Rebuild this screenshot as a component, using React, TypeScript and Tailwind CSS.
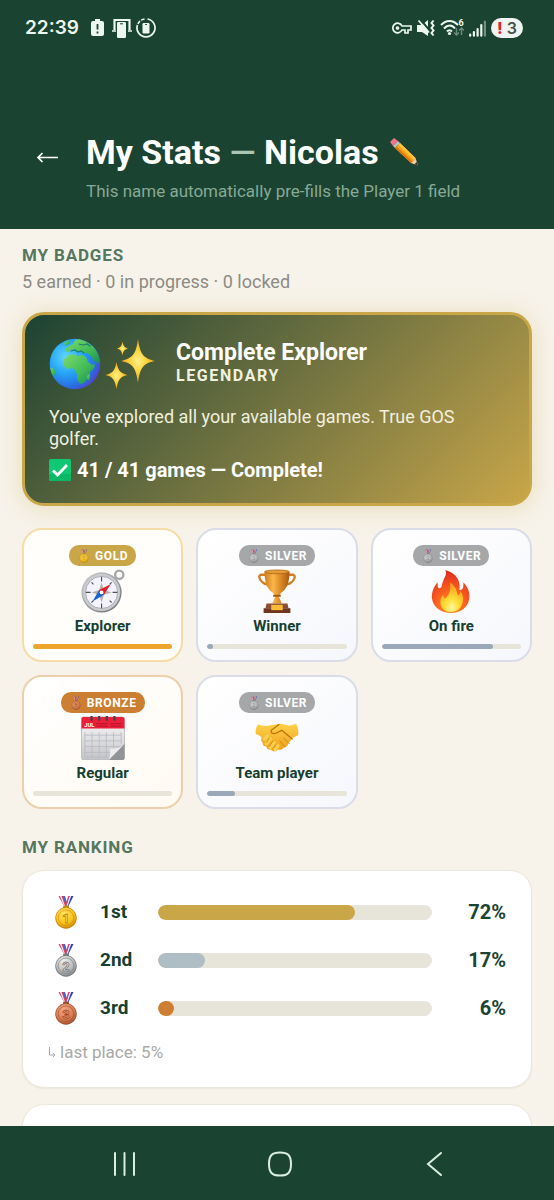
import React from "react";
import clsx from "clsx";

type Tier = "gold" | "silver" | "bronze";

interface Badge {
  name: string;
  tier: Tier;
  progress: number;
  icon: React.ReactNode;
}

const MEDALS = {
  gold: { light: "#ffe564", base: "#fbc31c", dark: "#c98308", digit: "1" },
  silver: { light: "#f0f0f0", base: "#b9babb", dark: "#77797b", digit: "2" },
  bronze: { light: "#f3ab86", base: "#d97d55", dark: "#a04c2c", digit: "3" },
};

const Medal = ({ tier, className }: { tier: Tier; className?: string }) => {
  const c = MEDALS[tier];
  return (
    <svg viewBox="0 0 22 34" className={className} aria-hidden="true">
      <defs>
        <radialGradient id={`medal-${tier}`} cx="0.4" cy="0.3" r="0.8">
          <stop offset="0" stopColor={c.light} />
          <stop offset="0.6" stopColor={c.base} />
          <stop offset="1" stopColor={c.dark} />
        </radialGradient>
      </defs>
      <path d="M3.500 1h4.500l4 11H9.500z" fill="#dc4757" />
      <path d="M5 1h1.500l3.500 10H9z" fill="#f3eef5" />
      <path d="M7.500 1h2.500l3 10h-2z" fill="#4a5fd0" />
      <path d="M18.500 1h-4.500l-4 11h3z" fill="#2742bb" />
      <path d="M16.200 1h-1.500L11 11h1.700z" fill="#eeeaf6" />
      <path d="M14.500 1h-1.300l-2.700 9 1 1z" fill="#df4759" />
      <rect x="8" y="10.500" width="6" height="3.500" rx="1.500" fill={c.dark} />
      <circle cx="11" cy="23" r="10.700" fill={c.dark} />
      <circle cx="11" cy="22.700" r="10" fill={`url(#medal-${tier})`} />
      <circle cx="11" cy="22.800" r="7.800" fill="none" stroke={c.dark} strokeWidth="0.800" opacity="0.700" />
      <text
        x="11"
        y="27.500"
        textAnchor="middle"
        fontSize="13"
        fontWeight="700"
        fontFamily="Roboto, sans-serif"
        fill={c.light}
        stroke={c.dark}
        strokeWidth="0.800"
      >
        {c.digit}
      </text>
    </svg>
  );
};

const Globe = () => (
  <svg viewBox="0 0 52 52" className="size-[52px]" aria-hidden="true">
    <defs>
      <radialGradient id="sea" cx="0.32" cy="0.36" r="0.75">
        <stop offset="0" stopColor="#5fd6ff" />
        <stop offset="0.45" stopColor="#25a3f5" />
        <stop offset="0.8" stopColor="#2a6be0" />
        <stop offset="1" stopColor="#5a3cc4" />
      </radialGradient>
      <linearGradient id="land" x1="0" y1="0" x2="1" y2="1">
        <stop offset="0" stopColor="#7ddd6c" />
        <stop offset="0.6" stopColor="#3fb955" />
        <stop offset="1" stopColor="#178a5a" />
      </linearGradient>
      <clipPath id="globe-clip">
        <circle cx="26" cy="26" r="25" />
      </clipPath>
    </defs>
    <circle cx="26" cy="26" r="25.300" fill="url(#sea)" />
    <g clipPath="url(#globe-clip)" fill="url(#land)">
      <path d="M18 11l2-3 4-2 2-4 6-2 10 3 8 9 3 11-3 2-3-1-2-1-3-5-4-3-5 0-3-2-3 1-2-3-3 1-2 2-4-1 1-3 3-1z" />
      <path d="M15 21l5-4 6-1 2 2 5-1 4 2 2 5 4 3 3-1-1 4-5 5-1 5-4 5-4 1-3-5 0-5-2-4-3-2-5 1-4-4z" />
      <path d="M38 38l3-3 0 5-2 3z" />
      <path d="M0 29l4 1 3 3-1 4-4 3-3-4z" />
      <path d="M15 5l5-3 1 3-4 3z" />
    </g>
    <path d="M22 13l4-1 3 2 3-1 3 2M30 6l4 1 4-1 3 2" fill="none" stroke="#167e74" strokeWidth="1.200" strokeLinecap="round" />
  </svg>
);

const Sparkles = () => (
  <svg viewBox="0 0 52 52" className="size-[52px]" aria-hidden="true">
    <defs>
      <radialGradient id="spark" cx="0.5" cy="0.5" r="0.55">
        <stop offset="0" stopColor="#fff08a" />
        <stop offset="0.45" stopColor="#fdd33d" />
        <stop offset="1" stopColor="#f39a1b" />
      </radialGradient>
    </defs>
    <g fill="url(#spark)">
      <path d="M33 1C35 16 38 20 50 23 38 25 35 30 33 45 31 30 28 25 16 23 28 20 31 16 33 1z" />
      <path d="M11.500 24c1.500 8.500 3.500 11 11 13-7.500 1.500-9.500 5-11 14-1.500-9-3.500-12.500-11-14 7.500-2 9.500-4.500 11-13z" />
      <path d="M17.500 3.500c.8 4.500 1.800 6 5.500 7-3.700 1-4.700 2.500-5.500 7-.8-4.500-1.800-6-5.500-7 3.700-1 4.700-2.500 5.500-7z" />
    </g>
  </svg>
);

const Compass = () => (
  <svg viewBox="0 0 46 46" className="size-11" aria-hidden="true">
    <defs>
      <linearGradient id="compass-rim" x1="0" y1="0" x2="1" y2="1">
        <stop offset="0" stopColor="#cdd0d2" />
        <stop offset="0.5" stopColor="#9da1a4" />
        <stop offset="1" stopColor="#666a6e" />
      </linearGradient>
    </defs>
    <circle cx="40" cy="6" r="4.300" fill="none" stroke="#a6a9ac" strokeWidth="2.500" />
    <path d="M34 9l3 3-3 3-3-4z" fill="#8b8f92" />
    <circle cx="21.500" cy="24.500" r="21" fill="url(#compass-rim)" />
    <circle cx="21.500" cy="24.500" r="19.500" fill="#c9cbce" />
    <circle cx="21.500" cy="24.500" r="16.800" fill="#f4f3fb" stroke="#999da2" strokeWidth="0.800" />
    <path d="M21.500 8v5M21.500 36v5M5 24.500h5M33 24.500h5M11 14l2 2M30 33l2 2M11 35l2-2M30 16l2-2" stroke="#4c5158" strokeWidth="1.200" />
    <path d="M21.500 14l2.500 8 8 2.500-8 2.500-2.500 8-2.500-8-8-2.500 8-2.500z" fill="#b5b1a8" />
    <path d="M31 16l-12 6 5 5z" fill="#e2192f" />
    <path d="M12 34l12-7-5-5z" fill="#1662cf" />
    <circle cx="21.500" cy="24.500" r="2" fill="#fff" />
  </svg>
);

const Trophy = () => (
  <svg viewBox="0 0 46 46" className="size-11" aria-hidden="true">
    <defs>
      <linearGradient id="cup" x1="0" y1="0" x2="1" y2="0">
        <stop offset="0" stopColor="#d57d17" />
        <stop offset="0.35" stopColor="#f9b74c" />
        <stop offset="0.6" stopColor="#e19029" />
        <stop offset="1" stopColor="#a9590f" />
      </linearGradient>
    </defs>
    <path d="M12 6H6c-3 1-1 6 2 8 2 2 5 2 8 3M34 6h6c3 1 1 6-2 8-2 2-5 2-8 3" fill="none" stroke="#cf8026" strokeWidth="2.400" />
    <path d="M10 3h26c0 10-2 18-9 22l-2 4 3 7H18l3-7-2-4C12 21 10 13 10 3z" fill="url(#cup)" />
    <ellipse cx="23" cy="3" rx="13" ry="2" fill="#e59a33" stroke="#a9610f" strokeWidth="0.800" />
    <path d="M19 27h8v2h-8z" fill="#a9590f" />
    <path d="M12 36h22l1 5H11z" fill="#8e5034" />
    <path d="M9 41h28v5H9z" fill="#70371f" />
    <rect x="17" y="37.500" width="12" height="5.500" fill="#f9bd35" />
  </svg>
);

const Fire = () => (
  <svg viewBox="0 0 46 46" className="size-11" aria-hidden="true">
    <defs>
      <radialGradient id="flame" cx="0.5" cy="0.85" r="0.85">
        <stop offset="0" stopColor="#ff9d1d" />
        <stop offset="0.5" stopColor="#fa5b20" />
        <stop offset="1" stopColor="#df281e" />
      </radialGradient>
      <radialGradient id="flame-core" cx="0.5" cy="0.85" r="0.75">
        <stop offset="0" stopColor="#fff7a1" />
        <stop offset="0.4" stopColor="#ffdf38" />
        <stop offset="1" stopColor="#fda11f" />
      </radialGradient>
    </defs>
    <path
      d="M17 1c8 2 15 8 15 17 0 3-1 4 1 4 3-1 3-4 3-8 5 5 7 11 6 17-1 9-9 15-19 15S4 40 3 30c0-5 1-11 6-16 0 4 0 6 2 6 3 0 2-4 4-8 2-5 4-7 2-11z"
      fill="url(#flame)"
    />
    <path
      d="M22 14c6 4 7 8 8 14 1-1 3-3 3-5 4 7 3 11 1 15-2 5-6 7-11 7-7 0-12-5-11-12 0-3 2-5 3-6 0 2 1 4 2 4 4-4 6-8 5-17z"
      fill="url(#flame-core)"
    />
  </svg>
);

const Calendar = () => (
  <svg viewBox="0 0 46 46" className="size-11" aria-hidden="true">
    <defs>
      <linearGradient id="sheet" x1="0" y1="0" x2="0" y2="1">
        <stop offset="0" stopColor="#fafafa" />
        <stop offset="1" stopColor="#c3c4c8" />
      </linearGradient>
    </defs>
    <rect x="0.500" y="1" width="45" height="45" rx="2.500" fill="url(#sheet)" stroke="#b2b3b8" strokeWidth="0.800" />
    <path d="M0.500 13V3a2 2 0 0 1 2-2h41a2 2 0 0 1 2 2v10z" fill="#eb1f38" />
    <path d="M16 8h12M31 8h11M16 10.500h12M31 10.500h11" stroke="#c11630" strokeWidth="1.300" />
    <text x="3.500" y="11.500" fontSize="6" fontWeight="700" fontFamily="Roboto, sans-serif" fill="#fff">
      JUL
    </text>
    <path d="M11 0v4M19 0v4M27 0v4M35 0v4" stroke="#45414d" strokeWidth="2.400" strokeLinecap="round" />
    <path d="M4 20h38M4 26h38M4 32h38M4 38h26M4 43h24M4 17v26M11.500 17v26M19 17v26M26.500 17v26M34 17v16M42 17v12" stroke="#b9bac1" strokeWidth="0.900" />
    <path d="M29 46L45.500 29v15a2 2 0 0 1-2 2z" fill="#929397" />
    <path d="M29 46c2-4 2-9 1-12 5 1 11 0 15.500-5z" fill="#ececef" />
  </svg>
);

const Handshake = () => (
  <svg viewBox="0 0 46 46" className="size-11" aria-hidden="true">
    <defs>
      <linearGradient id="hands" x1="0" y1="0" x2="0" y2="1">
        <stop offset="0" stopColor="#ffd24a" />
        <stop offset="1" stopColor="#ee9d17" />
      </linearGradient>
    </defs>
    <path
      d="M3 9c4 1 8 2 12 1l6-1 5-1c4 0 7 2 11 2l6-2c2 4 3 8 2 12l-6 3c-1 3-3 4-4 5 0 3-3 5-5 5-1 2-4 3-6 2-3 3-6 2-7 0-3 1-5-1-5-3-3 0-4-2-4-4-2-1-2-4-1-6-2-1-4-3-6-3-1-3 0-7 2-10z"
      fill="url(#hands)"
    />
    <path d="M25 9l-8 6c-1 4 4 4 7 2l4-2 11 9" fill="none" stroke="#bd6e0b" strokeWidth="1.300" strokeLinecap="round" />
    <path d="M30 23l6 6M26 26l5 6" fill="none" stroke="#cf8414" strokeWidth="1" strokeLinecap="round" />
    <path d="M10 24l3-3M12 29l4-5M16 33l4-5M21 35l3-4" stroke="#fbd04d" strokeWidth="3.600" strokeLinecap="round" />
    <path d="M12 28l3-5M15 32l4-6M19 34l3-4" stroke="#cc7e0c" strokeWidth="0.800" />
  </svg>
);

const Pencil = () => (
  <svg viewBox="0 0 30 30" className="size-[30px]" aria-hidden="true">
    <path d="M1 5l4-4 4 3-5 5z" fill="#f0748a" />
    <path d="M4 9l5-5 2 2-5 5z" fill="#b9c2ca" />
    <path d="M6 11l5-5 15.500 15-4.500 5z" fill="#f9a11b" />
    <path d="M9.200 7.800L11 6l15.500 15-1.800 2z" fill="#ffc43d" />
    <path d="M6 11l1.500-1.500 16 15L22 26z" fill="#e2760e" />
    <path d="M26.500 21l2.500 7.500-7-2.500z" fill="#f3cc9b" />
    <path d="M27.800 25l1.200 3.500-3.600-1.200z" fill="#3b3433" />
  </svg>
);

const Check = () => (
  <svg viewBox="0 0 22 22" className="size-[22px]" aria-hidden="true">
    <rect width="22" height="22" rx="1.500" fill="#10c873" />
    <path d="M0 15h22v5.500a1.500 1.500 0 0 1-1.500 1.500h-19A1.500 1.500 0 0 1 0 20.500z" fill="#0bb866" />
    <path d="M4 11.500l4.500 4.500L18 6" fill="none" stroke="#fff" strokeWidth="2.800" />
  </svg>
);

const badges: Badge[] = [
  { name: "Explorer", tier: "gold", progress: 100, icon: <Compass /> },
  { name: "Winner", tier: "silver", progress: 4, icon: <Trophy /> },
  { name: "On fire", tier: "silver", progress: 80, icon: <Fire /> },
  { name: "Regular", tier: "bronze", progress: 0, icon: <Calendar /> },
  { name: "Team player", tier: "silver", progress: 20, icon: <Handshake /> },
];

const ranking: { label: string; tier: Tier; value: number }[] = [
  { label: "1st", tier: "gold", value: 72 },
  { label: "2nd", tier: "silver", value: 17 },
  { label: "3rd", tier: "bronze", value: 6 },
];

const StatusBar = () => (
  <div className="flex h-14 items-center justify-between pl-[25px] pr-[31px] text-[#ecf8ef]">
    <div className="flex items-center gap-2">
      <span className="mr-1 font-[Inter,sans-serif] text-[19px] font-semibold">22:39</span>
      <svg viewBox="0 0 13 18" className="h-[18px] w-[13px]" aria-hidden="true">
        <path d="M4 0h5v2h2a2 2 0 0 1 2 2v11a2 2 0 0 1-2 2H2a2 2 0 0 1-2-2V4a2 2 0 0 1 2-2h2z" fill="currentColor" />
        <path d="M6.500 5v5.500M6.500 12.500v2" stroke="#1b4332" strokeWidth="1.800" />
      </svg>
      <svg viewBox="0 0 20 20" className="size-5" aria-hidden="true">
        <path d="M2.500 12V2h15v10" fill="none" stroke="currentColor" strokeWidth="2.200" />
        <path d="M0 13h4M16 13h4" stroke="currentColor" strokeWidth="1.600" />
        <rect x="5" y="4" width="9" height="16" rx="1.200" fill="currentColor" />
        <path d="M8 5.800h3" stroke="#1b4332" strokeWidth="1" />
      </svg>
      <svg viewBox="0 0 20 20" className="-ml-1 size-5" aria-hidden="true">
        <path d="M11.500 1a9 9 0 1 1-3 0" fill="none" stroke="currentColor" strokeWidth="1.700" />
        <path d="M4 2l2.500 3M1 6l3 2" stroke="#1b4332" strokeWidth="1.200" />
        <rect x="6.500" y="5" width="7" height="10.500" rx="1.200" fill="currentColor" />
        <path d="M9 6.500h2" stroke="#1b4332" strokeWidth="0.900" />
      </svg>
    </div>
    <div className="flex items-center gap-[5px]">
      <svg viewBox="0 0 20 12" className="h-3 w-5" fill="none" stroke="currentColor" strokeWidth="1.700" aria-hidden="true">
        <path d="M10 4A4.800 4.800 0 1 0 10 8h3v3h3V8h3V4z" />
        <circle cx="5.500" cy="6" r="1" />
      </svg>
      <svg viewBox="0 0 18 18" className="size-[18px]" aria-hidden="true">
        <path d="M0 6h5l6-5v16l-6-4H0z" fill="currentColor" />
        <path d="M3 0l10 12" stroke="#1b4332" strokeWidth="2" />
        <path d="M1.500 1.500l10.500 12" stroke="currentColor" strokeWidth="1.800" />
        <path d="M16.500 1.500l-2 2.500 2 2.500-2 2.500 2 2.500-2 2.500 2 2.500" fill="none" stroke="currentColor" strokeWidth="2" />
      </svg>
      <svg viewBox="0 0 24 20" className="h-5 w-6" aria-hidden="true">
        <g fill="none" stroke="currentColor" strokeWidth="2">
          <path d="M1 7c5-5.500 12-5.500 17 0M4 10.500c3.500-4 8-4 11 0" />
          <path d="M7 13.500c1.500-1.700 3.500-1.700 5 0" />
        </g>
        <circle cx="9.500" cy="15.500" r="1.600" fill="currentColor" />
        <path d="M16.500 10v7m-2.500-2.500l2.500 2.500 2.500-2.500M21.500 17v-7m-2.500 2.500l2.500-2.500 2.500 2.500" fill="none" stroke="#6b8c7b" strokeWidth="1.400" />
        <text x="18.500" y="8" fontSize="9" fontWeight="700" fontFamily="Roboto, sans-serif" fill="currentColor">
          6
        </text>
      </svg>
      <svg viewBox="0 0 17 17" className="size-[17px]" strokeWidth="2.200" strokeLinecap="round" aria-hidden="true">
        <path d="M1.200 14.500v1.200M4.900 12v3.700M8.600 9v6.700M12.300 5v10.700" stroke="currentColor" />
        <path d="M15.900 1.500v14.200" stroke="#74917f" />
      </svg>
      <div className="flex h-5 w-8 items-center justify-center gap-1 rounded-full bg-[#f0f4f0] font-[Inter,sans-serif] text-base font-semibold text-[#46504a]">
        <span className="font-extrabold text-[#dc2434]">!</span>
        <span>3</span>
      </div>
    </div>
  </div>
);

const BadgeCard = ({ badge }: { badge: Badge }) => (
  <li
    className={clsx(
      "flex flex-col items-center rounded-[20px] border-2 px-[9px] pt-[15px] pb-[11px]",
      badge.tier === "gold" && "border-[#f6dda8] bg-[#fffefa]",
      badge.tier === "silver" && "border-[#dadce8] bg-linear-to-br from-white to-[#f6f7fc]",
      badge.tier === "bronze" && "border-[#ecd0ac] bg-linear-to-br from-white to-[#fffaf2]"
    )}
  >
    <span
      className={clsx(
        "flex h-[21px] items-center gap-1.5 rounded-[10px] px-2 text-xs font-bold tracking-wider text-white",
        badge.tier === "gold" && "bg-[#c9a648]",
        badge.tier === "silver" && "bg-[#a6a7a9]",
        badge.tier === "bronze" && "bg-[#cc7f32]"
      )}
    >
      <Medal tier={badge.tier} className="ml-0.5 h-3.5 w-2.5 opacity-80" />
      {badge.tier.toUpperCase()}
    </span>
    <div className="mt-[3px] h-11">{badge.icon}</div>
    <h3 className="mt-[3px] text-[15px] leading-5 font-bold text-[#163f2f]">{badge.name}</h3>
    <div className="mt-2 h-[5px] w-full overflow-hidden rounded-full bg-[#e7e4da]">
      <div
        className={clsx("h-full rounded-full", badge.tier === "gold" ? "bg-[#eda52c]" : "bg-[#9ba8ba]")}
        style={{ width: `${badge.progress}%` }}
      />
    </div>
  </li>
);

const App = () => {
  return (
    <div className="flex h-screen flex-col bg-[#f7f3ea] font-[Roboto,sans-serif]">
      <header className="h-[229px] shrink-0 bg-[#1b4332]">
        <StatusBar />
        <div className="flex px-[34px] pt-[76px]">
          <button type="button" aria-label="Back" className="mt-3 h-[26px] w-[52px] shrink-0 text-white">
            <svg viewBox="0 0 26 26" className="size-[26px]" fill="none" stroke="currentColor" strokeWidth="1.700" aria-hidden="true">
              <path d="M24 13.500H4M8.500 9L4 13.500 8.500 18" />
            </svg>
          </button>
          <div>
            <div className="flex items-center gap-2.5">
              <h1 className="text-[34px] leading-10 font-bold text-white">
                My Stats <span className="font-medium text-[#a9c5b3]">—</span> Nicolas
              </h1>
              <button type="button" aria-label="Edit name">
                <Pencil />
              </button>
            </div>
            <p className="mt-[7px] text-[17px] leading-6 text-[#87a995]">
              This name automatically pre-fills the Player 1 field
            </p>
          </div>
        </div>
      </header>

      <main className="min-h-0 flex-1 overflow-hidden px-[22px] pt-4">
        <h2 className="text-[17px] leading-5 font-bold tracking-wider text-[#55775f]">MY BADGES</h2>
        <p className="mt-[5px] text-lg leading-6 text-[#8c8b84]">5 earned · 0 in progress · 0 locked</p>

        <section className="mt-[18px] rounded-[22px] border-3 border-[#c9a648] bg-linear-135 from-[#1b4332] to-[#c9a648] px-6 pt-[23px] pb-[21px] text-white shadow-[0_2px_24px_rgba(201,166,72,0.3)]">
          <div className="flex items-center">
            <div className="flex gap-1">
              <Globe />
              <Sparkles />
            </div>
            <div className="ml-[19px]">
              <h3 className="text-[23px] leading-6 font-bold">Complete Explorer</h3>
              <p className="text-base leading-[22px] font-bold tracking-widest text-[#f0f1df]">LEGENDARY</p>
            </div>
          </div>
          <p className="mt-4 text-lg leading-[22px] text-[#f1f0df]">
            You've explored all your available games. True GOS golfer.
          </p>
          <p className="mt-2 flex items-center gap-1.5 text-xl leading-6 font-bold">
            <Check />
            41 / 41 games — Complete!
          </p>
        </section>

        <ul className="mt-[22px] grid grid-cols-3 gap-[13px]">
          {badges.map((badge) => (
            <BadgeCard key={badge.name} badge={badge} />
          ))}
        </ul>

        <h2 className="mt-7 text-[17px] leading-5 font-bold tracking-wider text-[#55775f]">MY RANKING</h2>
        <section className="mt-[13px] rounded-[22px] border border-[#ebe7dc] bg-white px-[25px] pt-[17px] pb-[23px] shadow-xs">
          {ranking.map((row) => (
            <div key={row.label} className="flex h-12 items-center">
              <Medal tier={row.tier} className="ml-[7px] h-[34px] w-[22px]" />
              <span className="ml-[23px] w-[58px] text-[19px] font-bold text-[#163f2f]">{row.label}</span>
              <div className="h-[15px] flex-1 overflow-hidden rounded-full bg-[#e7e4da]">
                <div
                  className={clsx(
                    "h-full rounded-full",
                    row.tier === "gold" && "bg-[#c9a648]",
                    row.tier === "silver" && "bg-[#afbec5]",
                    row.tier === "bronze" && "bg-[#cc7f32]"
                  )}
                  style={{ width: `${row.value}%` }}
                />
              </div>
              <span className="w-[74px] text-right text-xl font-bold text-[#1b4332]">{row.value}%</span>
            </div>
          ))}
          <p className="mt-2 flex items-center gap-1 text-[17px] leading-6 text-[#a9a9a7]">
            <svg viewBox="0 0 8 12" className="h-3 w-2" fill="none" stroke="currentColor" aria-hidden="true">
              <path d="M1.500 1v8H7M5 7l2 2-2 2" />
            </svg>
            last place: 5%
          </p>
        </section>

        <section className="mt-4 h-40 rounded-[22px] border border-[#ebe7dc] bg-white shadow-xs" />
      </main>

      <nav className="z-10 flex h-[74px] shrink-0 items-center justify-around bg-[#1b4332] pt-0.5 pr-[42px] pl-12 text-[#d9eee0]">
        <button type="button" aria-label="Recent apps">
          <svg viewBox="0 0 28 28" className="size-7" fill="none" stroke="currentColor" strokeWidth="2" strokeLinecap="round" aria-hidden="true">
            <path d="M4 3v22M13.500 3v22M23 3v22" />
          </svg>
        </button>
        <button type="button" aria-label="Home">
          <svg viewBox="0 0 28 28" className="size-7" fill="none" stroke="currentColor" strokeWidth="2" aria-hidden="true">
            <path d="M14 2.500c8 0 11 3 11 11.500s-3 11.500-11 11.500S3 22.500 3 14 6 2.500 14 2.500z" />
          </svg>
        </button>
        <button type="button" aria-label="Go back">
          <svg viewBox="0 0 28 28" className="size-7" fill="none" stroke="currentColor" strokeWidth="2" strokeLinecap="round" aria-hidden="true">
            <path d="M20 3L7 14l13 11" />
          </svg>
        </button>
      </nav>
    </div>
  );
};

export default App;
